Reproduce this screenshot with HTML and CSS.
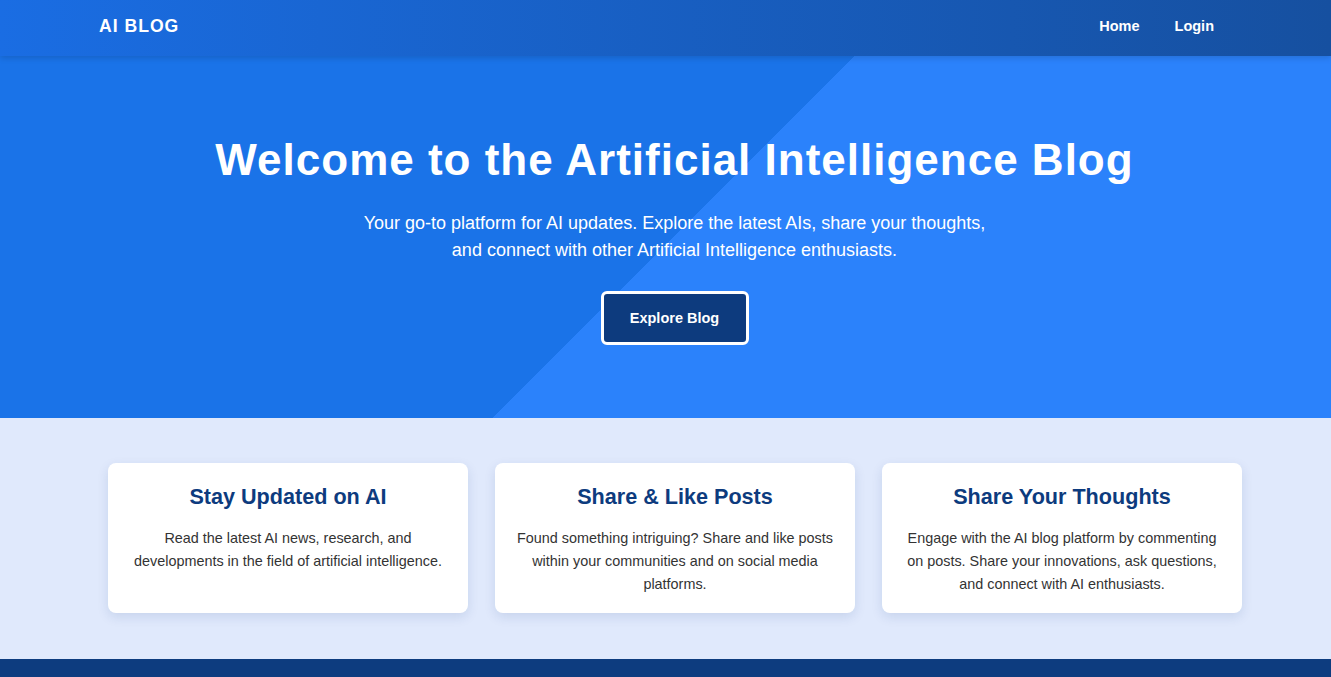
FILE: index.html
```html
<!DOCTYPE html>
<html lang="en">
<head>
<meta charset="utf-8">
<title>AI Blog</title>
<link rel="stylesheet" href="styles.css">
</head>
<body>
<header class="navbar">
  <div class="nav-inner">
    <a class="brand" href="#">AI BLOG</a>
    <nav class="nav-links">
      <a href="#">Home</a>
      <a href="#">Login</a>
    </nav>
  </div>
</header>
<section class="hero">
  <h1>Welcome to the Artificial Intelligence Blog</h1>
  <p>Your go-to platform for AI updates. Explore the latest AIs, share your thoughts, and connect with other Artificial Intelligence enthusiasts.</p>
  <a class="btn" href="#">Explore Blog</a>
</section>
<section class="features">
  <div class="feature-grid">
    <div class="card">
      <h2>Stay Updated on AI</h2>
      <p>Read the latest AI news, research, and developments in the field of artificial intelligence.</p>
    </div>
    <div class="card">
      <h2>Share &amp; Like Posts</h2>
      <p>Found something intriguing? Share and like posts within your communities and on social media platforms.</p>
    </div>
    <div class="card">
      <h2>Share Your Thoughts</h2>
      <p>Engage with the AI blog platform by commenting on posts. Share your innovations, ask questions, and connect with AI enthusiasts.</p>
    </div>
  </div>
</section>
<footer class="footer"></footer>
</body>
</html>
```
FILE: styles.css
```css
* { box-sizing: border-box; }
html, body { margin: 0; padding: 0; }
body {
  font-family: "Liberation Sans", Arial, sans-serif;
  background: #e0e9fc;
  color: #333;
}
a { text-decoration: none; color: inherit; }

.navbar {
  height: 56px;
  background: linear-gradient(90deg, #1a6de3 0%, #1650a0 100%);
  box-shadow: 0 2px 6px rgba(0,0,0,0.15);
  position: relative;
  z-index: 2;
}
.nav-inner {
  height: 100%;
  display: flex;
  align-items: center;
  justify-content: space-between;
  padding: 0 101px 4px 99px;
}
.brand {
  color: #fff;
  font-weight: 700;
  font-size: 17.6px;
  letter-spacing: 1px;
}
.nav-links { display: flex; gap: 0; }
.nav-links a {
  color: #fff;
  font-weight: 700;
  font-size: 14.5px;
  padding: 8px 16px 8px 20px;
}
.nav-links a:first-child { margin-right: -1px; }

.hero {
  height: 362px;
  background: linear-gradient(135deg, #1a73e8 50.5%, #2b82fb 50.5%);
  color: #fff;
  text-align: center;
  display: flex;
  flex-direction: column;
  align-items: center;
  padding: 79px 0 0 18px;
}
.hero h1 {
  margin: 0;
  font-size: 44px;
  line-height: 50px;
  letter-spacing: 1px;
  font-weight: 700;
}
.hero p {
  margin: 25px 0 0;
  max-width: 640px;
  font-size: 18px;
  line-height: 27px;
}
.btn {
  margin-top: 27px;
  width: 148px;
  height: 54px;
  display: flex;
  align-items: center;
  justify-content: center;
  background: #0d3b7e;
  border: 3px solid #fff;
  border-radius: 6px;
  color: #fff;
  font-weight: 700;
  font-size: 14.5px;
}

.features {
  height: 241px;
  padding: 45px 0 0;
}
.feature-grid {
  display: grid;
  grid-template-columns: repeat(3, 360px);
  gap: 27px;
  justify-content: center;
  padding-left: 19px;
}
.card {
  background: #fff;
  border-radius: 8px;
  height: 150px;
  padding: 21px 20px;
  text-align: center;
  box-shadow: 0 4px 12px rgba(13, 59, 126, 0.12);
}
.card h2 {
  margin: 0;
  color: #0d3b7e;
  font-size: 21.6px;
  line-height: 26px;
  font-weight: 700;
}
.card p {
  margin: 17px 0 0;
  font-size: 14.4px;
  line-height: 23px;
  color: #333;
}

.footer {
  height: 60px;
  background: #0d3c7f;
}
```
